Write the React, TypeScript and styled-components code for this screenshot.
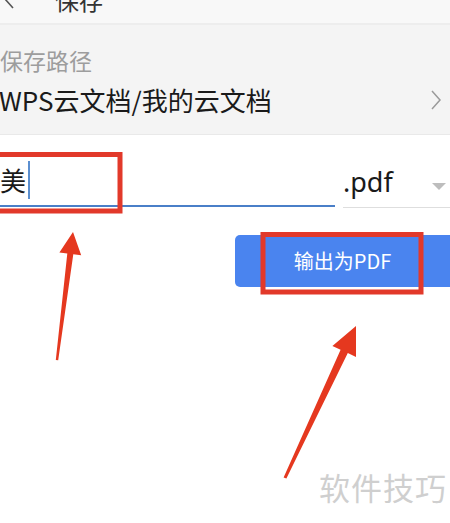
import React from 'react';
import styled, { createGlobalStyle } from 'styled-components';

const GlobalStyle = createGlobalStyle`
  html, body {
    margin: 0;
    padding: 0;
    background: #ffffff;
    overflow: hidden;
  }
  body {
    font-family: "Noto Sans CJK SC", "Noto Sans", sans-serif;
  }
`;

const ANNOTATION_RED = '#e2392a';

const App: React.FC = () => {
  return (
    <Page>
      <GlobalStyle />
      <Header>
        <BackIcon width="12" height="20" viewBox="0 0 12 20">
          <path d="M10 1 L2 10 L10 19" fill="none" stroke="#555" strokeWidth="1.6" />
        </BackIcon>
        <HeaderTitle>保存</HeaderTitle>
      </Header>

      <PathSection>
        <FieldLabel>保存路径</FieldLabel>
        <PathRow>
          <PathText>WPS云文档/我的云文档</PathText>
          <svg width="12" height="22" viewBox="0 0 12 22">
            <path d="M2 2 L10 11 L2 20" fill="none" stroke="#9a9a9a" strokeWidth="1.5" />
          </svg>
        </PathRow>
      </PathSection>

      <NameRow>
        <NameInput>
          <InputText>美</InputText>
          <Caret />
        </NameInput>
        <FormatSelect>
          <FormatText>.pdf</FormatText>
          <svg width="14" height="8" viewBox="0 0 14 8">
            <path d="M0 0 L14 0 L7 7 Z" fill="#bdbdbd" />
          </svg>
        </FormatSelect>
      </NameRow>

      <ActionRow>
        <ExportButton>输出为PDF</ExportButton>
      </ActionRow>

      <Annotations width="450" height="523" viewBox="0 0 450 523">
        <rect x="-10" y="154.5" width="130" height="56.5" fill="none" stroke={ANNOTATION_RED} strokeWidth="5" />
        <rect x="263" y="234.5" width="158" height="57.5" fill="none" stroke={ANNOTATION_RED} strokeWidth="5" />
        <polygon
          points="73,232 81.2,255.2 73.3,254.2 58.2,360.3 55.8,360 67.3,253.4 59.4,252.4"
          fill="#e5381f"
        />
        <polygon
          points="356,326 356,356.9 347.8,353.1 286.4,478.6 283.6,477.4 340.6,349.7 332.4,345.9"
          fill="#e5381f"
        />
      </Annotations>

      <Watermark>软件技巧</Watermark>
    </Page>
  );
};

const Page = styled.div`
  position: relative;
  width: 450px;
  height: 523px;
  overflow: hidden;
  background: #ffffff;
`;

const Header = styled.header`
  height: 23px;
  display: flex;
  align-items: flex-end;
  gap: 40px;
  padding-left: 3px;
  background: #f8f8f8;
  border-bottom: 2px solid #ededed;
  overflow: hidden;
`;

const BackIcon = styled.svg`
  margin-bottom: 14px;
  flex-shrink: 0;
`;

const HeaderTitle = styled.h1`
  margin: 0 0 11px;
  font-size: 24px;
  line-height: 24px;
  font-weight: 400;
  color: #333;
`;

const PathSection = styled.section`
  height: 110px;
  padding-top: 21px;
  box-sizing: border-box;
  background: #f4f4f4;
  border-bottom: 1px solid #e9e9e9;
`;

const FieldLabel = styled.div`
  font-size: 23px;
  line-height: 28px;
  color: #9d9d9d;
`;

const PathRow = styled.div`
  display: flex;
  align-items: center;
  justify-content: space-between;
  margin-top: 10px;
  padding-right: 8px;
`;

const PathText = styled.div`
  margin-left: -1px;
  font-size: 26px;
  line-height: 32px;
  color: #1a1a1a;
`;

const NameRow = styled.div`
  display: flex;
  align-items: flex-end;
  gap: 8px;
  margin-top: 20px;
`;

const NameInput = styled.div`
  width: 335px;
  height: 50px;
  display: flex;
  align-items: center;
  border-bottom: 2px solid #4a7fc8;
`;

const InputText = styled.span`
  font-size: 26px;
  line-height: 32px;
  color: #1a1a1a;
`;

const Caret = styled.span`
  width: 2px;
  height: 38px;
  margin-left: 2px;
  background: #5b8fd0;
`;

const FormatSelect = styled.div`
  flex: 1;
  height: 50px;
  display: flex;
  align-items: center;
  justify-content: space-between;
  padding-right: 4px;
  border-bottom: 1px solid #dedede;
  margin-bottom: -1px;

  svg {
    margin-top: 10px;
  }
`;

const FormatText = styled.span`
  font-family: "Noto Sans", "Open Sans", sans-serif;
  font-size: 27px;
  line-height: 32px;
  color: #1a1a1a;
`;

const ActionRow = styled.div`
  display: flex;
  justify-content: flex-end;
  margin-top: 28px;
  margin-right: -10px;
`;

const ExportButton = styled.button`
  width: 225px;
  height: 52px;
  padding: 0 10px 0 0;
  border: none;
  border-radius: 5px;
  background: #4a84ef;
  color: #ffffff;
  font-family: "Noto Sans CJK SC", "Noto Sans", sans-serif;
  font-size: 20px;
  line-height: 52px;
`;

const Annotations = styled.svg`
  position: absolute;
  left: 0;
  top: 0;
  pointer-events: none;
`;

const Watermark = styled.div`
  position: absolute;
  left: 319px;
  top: 465px;
  font-size: 31px;
  line-height: 44px;
  color: #cfcfcf;
  letter-spacing: 1px;
`;

export default App;
